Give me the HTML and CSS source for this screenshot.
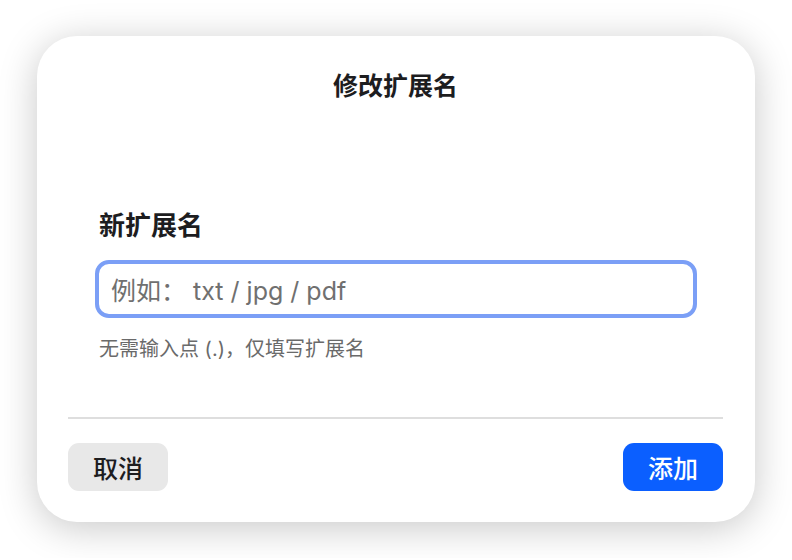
FILE: index.html
```html
<!DOCTYPE html>
<html lang="zh-CN">
<head>
<meta charset="utf-8">
<title>修改扩展名</title>
<link rel="stylesheet" href="styles.css">
</head>
<body>
  <div class="dialog">
    <h1 class="title">修改扩展名</h1>
    <div class="form">
      <label class="label" for="ext">新扩展名</label>
      <div class="input">
        <span class="placeholder">例如： txt / jpg / pdf</span>
      </div>
      <p class="hint">无需输入点 (.)，仅填写扩展名</p>
    </div>
    <div class="divider"></div>
    <div class="actions">
      <button class="btn btn-cancel">取消</button>
      <button class="btn btn-primary">添加</button>
    </div>
  </div>
</body>
</html>
```

FILE: styles.css
```css
* { box-sizing: border-box; }
html, body { margin: 0; background: #ffffff; }
body {
  padding: 36px 37px;
  font-family: Inter, "Noto Sans CJK SC", sans-serif;
  color: #1d1d1f;
}
.dialog {
  width: 718px;
  height: 486px;
  background: #ffffff;
  border-radius: 40px;
  box-shadow: 0 6px 38px rgba(0, 0, 0, 0.22);
  padding: 35px 32px 31px 31px;
  display: flex;
  flex-direction: column;
}
.title {
  margin: 0;
  text-align: center;
  font-size: 25px;
  line-height: 30px;
  font-weight: 700;
  color: #1d1d1f;
}
.form {
  margin-top: 110px;
  padding: 0 26px 0 27px;
  display: flex;
  flex-direction: column;
}
.label {
  padding-left: 4px;
  font-size: 26px;
  line-height: 30px;
  font-weight: 700;
  color: #1d1d1f;
}
.input {
  margin-top: 19px;
  height: 58px;
  border: 4px solid #7b9ff6;
  border-radius: 14px;
  padding: 0 12px;
  display: flex;
  align-items: center;
}
.placeholder {
  font-size: 25px;
  color: #707070;
}
.hint {
  margin: 19px 0 0;
  padding-left: 4px;
  font-size: 20px;
  line-height: 24px;
  color: #6a6a6a;
}
.divider {
  margin-top: 56px;
  height: 2px;
  background: #dedede;
}
.actions {
  margin-top: 24px;
  display: flex;
  justify-content: space-between;
}
.btn {
  width: 100px;
  height: 48px;
  border: none;
  border-radius: 11px;
  font-family: Inter, "Noto Sans CJK SC", sans-serif;
  font-size: 25px;
  font-weight: 500;
  padding: 0;
}
.btn-cancel {
  background: #e8e8e8;
  color: #1d1d1f;
}
.btn-primary {
  background: #0b5fff;
  color: #ffffff;
}
```
